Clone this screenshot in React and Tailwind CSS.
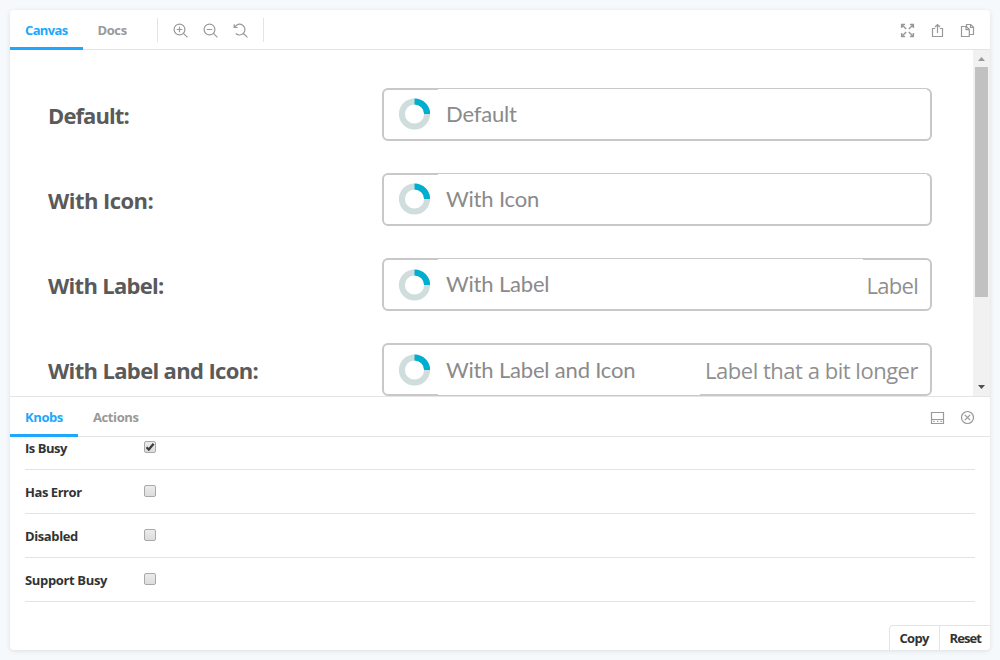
import React from 'react';

const stroke = { fill: 'none', stroke: '#999', strokeWidth: 1.2 };

function Icon({ children }) {
  return (
    <svg width="16" height="16" viewBox="0 0 16 16" className="block shrink-0" {...stroke}>
      {children}
    </svg>
  );
}

const ZoomIn = () => (
  <Icon>
    <circle cx="6.5" cy="6.5" r="5.4" />
    <path d="M10.4 10.4L14.4 14.4M6.5 3.7v5.6M3.7 6.5h5.6" />
  </Icon>
);
const ZoomOut = () => (
  <Icon>
    <circle cx="6.5" cy="6.5" r="5.4" />
    <path d="M10.4 10.4L14.4 14.4M3.7 6.5h5.6" />
  </Icon>
);
const ZoomReset = () => (
  <Icon>
    <path d="M1.7 4.2A5.4 5.4 0 1 1 2.8 10.5M1.2 1.2v3.3h3.4M10.4 10.4L14.4 14.4" />
  </Icon>
);
const Grow = () => (
  <Icon>
    <g strokeWidth="1.4">
      <path d="M2.6 5V1.5h3.5M2.8 1.7L7.2 6.1M10.9 1.5h3.5V5M14.2 1.7L9.8 6.1M2.6 10v3.5h3.5M2.8 13.3L7.2 8.9M14.4 10v3.5h-3.5M14.2 13.3L9.8 8.9" />
    </g>
  </Icon>
);
const Share = () => (
  <Icon>
    <path d="M6.2 5.5H3.5v8h10v-8h-2.7M8.5 10V1.5M6 4L8.5 1.5L11 4" />
  </Icon>
);
const CopyIcon = () => (
  <Icon>
    <path d="M2.5 3.5h4.8l3 2.8v7.2H2.5zM7 3.6v3h3.2" />
    <path d="M7.5 3.4V1.5h4.2l2.8 2.7v7.3h-4.2M11.5 1.6v2.9h3" />
  </Icon>
);
const BottomBar = () => (
  <Icon>
    <path d="M2.5 2.5h12v11h-12z M2.5 9.5h12" />
    <path d="M4.3 11.3h9" strokeDasharray="1.4 2.2" />
  </Icon>
);
const Close = () => (
  <Icon>
    <circle cx="8.5" cy="7.5" r="6" />
    <path d="M5.8 4.8l5.4 5.4M11.2 4.8l-5.4 5.4" />
  </Icon>
);

function Tab({ children, active, className }) {
  return (
    <div
      className={`flex h-[40px] items-center border-b-[3px] pt-[5px] pl-[15px] text-[13px] font-bold whitespace-nowrap ${
        active ? 'border-[#1ea7fd] text-[#1ea7fd]' : 'border-transparent text-[#999]'
      } ${className}`}
    >
      {children}
    </div>
  );
}

function Spinner({ className }) {
  return (
    <svg width="31" height="32" viewBox="0 0 31 32" className={`shrink-0 ${className}`} fill="none" strokeWidth="6">
      <circle cx="15.5" cy="16" r="12.6" stroke="#cfdddd" />
      <path d="M15.5 3.4A12.6 12.6 0 0 1 28.1 16" stroke="#00aed0" />
    </svg>
  );
}

function Field({ title, titleClass, text, textClass, label, labelClass, spinnerClass, thin }) {
  return (
    <div className="flex h-[53px]">
      <div className={`w-[334px] pt-[11px] text-[22px] leading-[32px] font-bold whitespace-nowrap text-[#5a5a5a] ${titleClass}`}>
        {title}
      </div>
      <div className="relative flex h-[53px] w-[550px] items-center rounded-[6px] border-2 border-[#c8c8c8] pr-[12px] pl-[15px]">
        <div className={`absolute h-px bg-white ${thin}`} />
        <Spinner className={spinnerClass} />
        <span
          className={`ml-[16px] grow font-['Lato',sans-serif] text-[22px] leading-[30px] tracking-[-0.18px] whitespace-nowrap text-[#8a8a8a] ${textClass}`}
        >
          {text}
        </span>
        {label && (
          <span className={`text-[22px] leading-[30px] whitespace-nowrap text-[#8f8f8f] ${labelClass}`}>
            {label}
          </span>
        )}
      </div>
    </div>
  );
}

function Knob({ label, checked, className }) {
  return (
    <div className="flex h-[44px] items-center border-b border-[#e4e4e4] text-[13px] font-bold text-[#333]">
      <div className={`w-[119px] pt-[2px] whitespace-nowrap ${className}`}>{label}</div>
      <div className="mb-[2px] flex h-[12px] w-[12px] items-center justify-center rounded-[2px] border border-[#a9a9a9] bg-linear-to-b from-[#ececec] to-[#dcdcdc]">
        {checked && (
          <svg width="10" height="10" viewBox="0 0 10 10" className="shrink-0" fill="none" stroke="#3c3c3c" strokeWidth="2.2">
            <path d="M1.5 5.2L3.8 7.5L8.6 1.8" />
          </svg>
        )}
      </div>
    </div>
  );
}

export default function App() {
  return (
    <div className="h-[660px] w-[1000px] overflow-hidden bg-[#f6f9fc] p-[10px] font-['Open_Sans','Noto_Sans',sans-serif]">
      <div className="flex h-[640px] flex-col overflow-hidden rounded-[4px] bg-white shadow-[0_1px_5px_rgba(0,0,0,0.1)]">
        <header className="flex h-[40px] shrink-0 items-start shadow-[inset_0_-1px_0_#e4e4e4]">
          <Tab active className="w-[73px] tracking-[-0.65px]">Canvas</Tab>
          <Tab className="w-[74px] -indent-[0.5px] tracking-[-0.4px]">Docs</Tab>
          <div className="mt-[8px] h-[24px] w-px bg-[#e4e4e4]" />
          <div className="mt-[13px] ml-[15px] flex gap-[14px]">
            <ZoomIn />
            <ZoomOut />
            <ZoomReset />
          </div>
          <div className="mt-[8px] ml-[14px] h-[24px] w-px bg-[#e4e4e4]" />
          <div className="mt-[13px] mr-[15px] ml-auto flex gap-[14px]">
            <Grow />
            <Share />
            <CopyIcon />
          </div>
        </header>

        <main className="flex h-[346px] shrink-0 overflow-hidden">
          <div className="flex w-[963px] shrink-0 flex-col gap-[32px] pt-[38px] pl-[38px]">
            <Field title="Default:" titleClass="tracking-[-0.9px]" text="Default" textClass="-mt-[2px]" spinnerClass="-mt-px" thin="-top-px left-[54px] right-[3px]" />
            <Field title="With Icon:" titleClass="tracking-[-0.55px]" text="With Icon" textClass="-mt-[2px]" spinnerClass="-mt-px" thin="-top-px left-[54px] right-[3px]" />
            <Field title="With Label:" titleClass="tracking-[-0.7px]" text="With Label" textClass="-mt-[2px]" label="Label" labelClass="tracking-[-0.7px]" thin="-top-px left-[54px] right-[67px]" />
            <Field title="With Label and Icon:" titleClass="tracking-[-0.65px]" text="With Label and Icon" textClass="" label="Label that a bit longer" labelClass="tracking-[-0.48px]" thin="-bottom-px left-[54px] right-[230px]" />
          </div>
          <div className="flex w-[17px] shrink-0 flex-col items-center bg-[#f1f1f1]">
            <svg width="17" height="17" viewBox="0 0 17 17" className="shrink-0"><path d="M5 11L8.5 7L12 11z" fill="#999" /></svg>
            <div className="h-[230px] w-[13px] bg-[#c1c1c1]" />
            <svg width="17" height="17" viewBox="0 0 17 17" className="mt-auto shrink-0"><path d="M5 6L8.5 10L12 6z" fill="#505050" /></svg>
          </div>
        </main>

        <div className="flex h-[41px] shrink-0 items-start border-t border-[#e4e4e4] shadow-[inset_0_-1px_0_#e4e4e4]">
          <Tab active className="w-[68px] tracking-[-0.4px]">Knobs</Tab>
          <Tab className="w-[90px] tracking-[-0.4px]">Actions</Tab>
          <div className="mt-[13px] mr-[15px] ml-auto flex gap-[14px]">
            <BottomBar />
            <Close />
          </div>
        </div>

        <section className="flex h-[213px] shrink-0 flex-col overflow-hidden">
          <div className="-mt-[11px] px-[15px]">
            <Knob label="Is Busy" checked className="tracking-[-0.5px]" />
            <Knob label="Has Error" className="tracking-[-0.45px]" />
            <Knob label="Disabled" className="tracking-[-0.4px]" />
            <Knob label="Support Busy" className="tracking-[-0.35px]" />
          </div>
          <div className="mt-auto ml-auto flex h-[25px] w-[101px] shrink-0 rounded-tl-[4px] border-t border-l border-[#e4e4e4] text-[13px] font-bold text-[#333]">
            <div className="w-[49px] pl-[9.5px] leading-[25px] tracking-[-0.7px]">Copy</div>
            <div className="grow border-l border-[#e4e4e4] pl-[9.5px] leading-[25px] tracking-[-0.9px]">Reset</div>
          </div>
        </section>
      </div>
    </div>
  );
}
